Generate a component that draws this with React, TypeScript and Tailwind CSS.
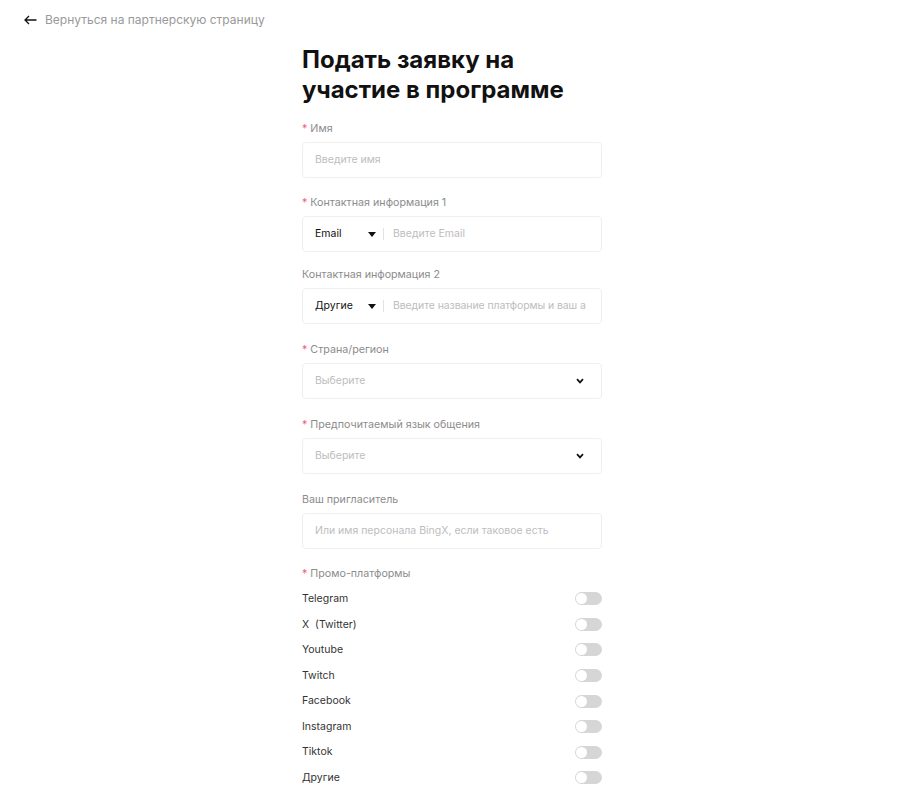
import React from 'react'

const Req = () => <span className="text-[#f0607a] mr-[3px]">*</span>

function Label({ required, children, mb = 'mb-[4px]' }: { required?: boolean; children: React.ReactNode; mb?: string }) {
  return (
    <div className={`text-[10.7px] leading-[18px] text-[#8c8c8c] ${mb}`}>
      {required && <Req />}
      {children}
    </div>
  )
}

function Caret() {
  return (
    <svg width="8" height="5" viewBox="0 0 8 5" className="shrink-0">
      <path d="M0 0h8L4 5z" fill="#111" />
    </svg>
  )
}

function Chevron() {
  return (
    <svg width="8" height="6" viewBox="0 0 8 6" className="shrink-0">
      <path d="M1 1.2 4 4.4 7 1.2" stroke="#111" strokeWidth="1.7" fill="none" />
    </svg>
  )
}

function Box({ children, tight }: { children: React.ReactNode; tight?: boolean }) {
  return (
    <div
      className={`h-9 border border-[#efefef] rounded-[4px] flex items-center pl-3 text-[10.5px] ${
        tight ? 'pr-3' : 'pr-[17px]'
      }`}
    >
      {children}
    </div>
  )
}

const platforms = ['Telegram', 'X  (Twitter)', 'Youtube', 'Twitch', 'Facebook', 'Instagram', 'Tiktok', 'Другие']

export default function App() {
  return (
    <div className="min-h-screen bg-white font-['Inter','Liberation_Sans',sans-serif] text-[#111]">
      <div className="flex items-center gap-2 pl-6 pt-[11px] text-[12px] text-[#999] leading-[18px]">
        <svg width="13" height="10" viewBox="0 0 13 10">
          <path d="M12.5 5H1.2M5 1 1 5l4 4" stroke="#111" strokeWidth="1.3" fill="none" />
        </svg>
        <span>Вернуться на партнерскую страницу</span>
      </div>

      <div className="flex justify-center pr-[2px]">
        <div className="w-[300px] mt-[16px] pb-4">
          <h1 className="text-[24px] leading-[30px] font-bold whitespace-pre-line mb-[15px]">
            {'Подать заявку на\nучастие в программе'}
          </h1>

          <div className="mb-[16px]">
            <Label required>Имя</Label>
            <Box>
              <span className="text-[#bdbdbd]">Введите имя</span>
            </Box>
          </div>

          <div className="mb-[14px]">
            <Label required>Контактная информация 1</Label>
            <Box>
              <span className="w-[53px] text-[#111]">Email</span>
              <Caret />
              <span className="w-px h-3 bg-[#e3e3e3] ml-[7px] mr-[9px]" />
              <span className="text-[#bdbdbd]">Введите Email</span>
            </Box>
          </div>

          <div className="mb-[17px]">
            <Label>Контактная информация 2</Label>
            <Box tight>
              <span className="w-[53px] shrink-0 text-[#111]">Другие</span>
              <Caret />
              <span className="w-px h-3 shrink-0 bg-[#e3e3e3] ml-[7px] mr-[9px]" />
              <span className="text-[#bdbdbd] whitespace-nowrap tracking-[-0.1px]">Введите название платформы и ваш а</span>
            </Box>
          </div>

          <div className="mb-[17px]">
            <Label required>Страна/регион</Label>
            <Box>
              <span className="text-[#bdbdbd] flex-1">Выберите</span>
              <Chevron />
            </Box>
          </div>

          <div className="mb-[17px]">
            <Label required>Предпочитаемый язык общения</Label>
            <Box>
              <span className="text-[#bdbdbd] flex-1">Выберите</span>
              <Chevron />
            </Box>
          </div>

          <div className="mb-[16px]">
            <Label>Ваш пригласитель</Label>
            <Box>
              <span className="text-[#bdbdbd]">Или имя персонала BingX, если таковое есть</span>
            </Box>
          </div>

          <Label required mb="mb-[3px]">Промо-платформы</Label>
          <div className="flex flex-col">
            {platforms.map((p) => (
              <div key={p} className="flex items-center justify-between h-[25.6px] text-[10.5px] text-[#333] whitespace-pre">
                <span>{p}</span>
                <span className="w-[27px] h-[13px] rounded-full bg-[#d6d6d6] relative">
                  <span className="absolute left-[1px] top-[1px] w-[11px] h-[11px] rounded-full bg-white" />
                </span>
              </div>
            ))}
          </div>
        </div>
      </div>
    </div>
  )
}
